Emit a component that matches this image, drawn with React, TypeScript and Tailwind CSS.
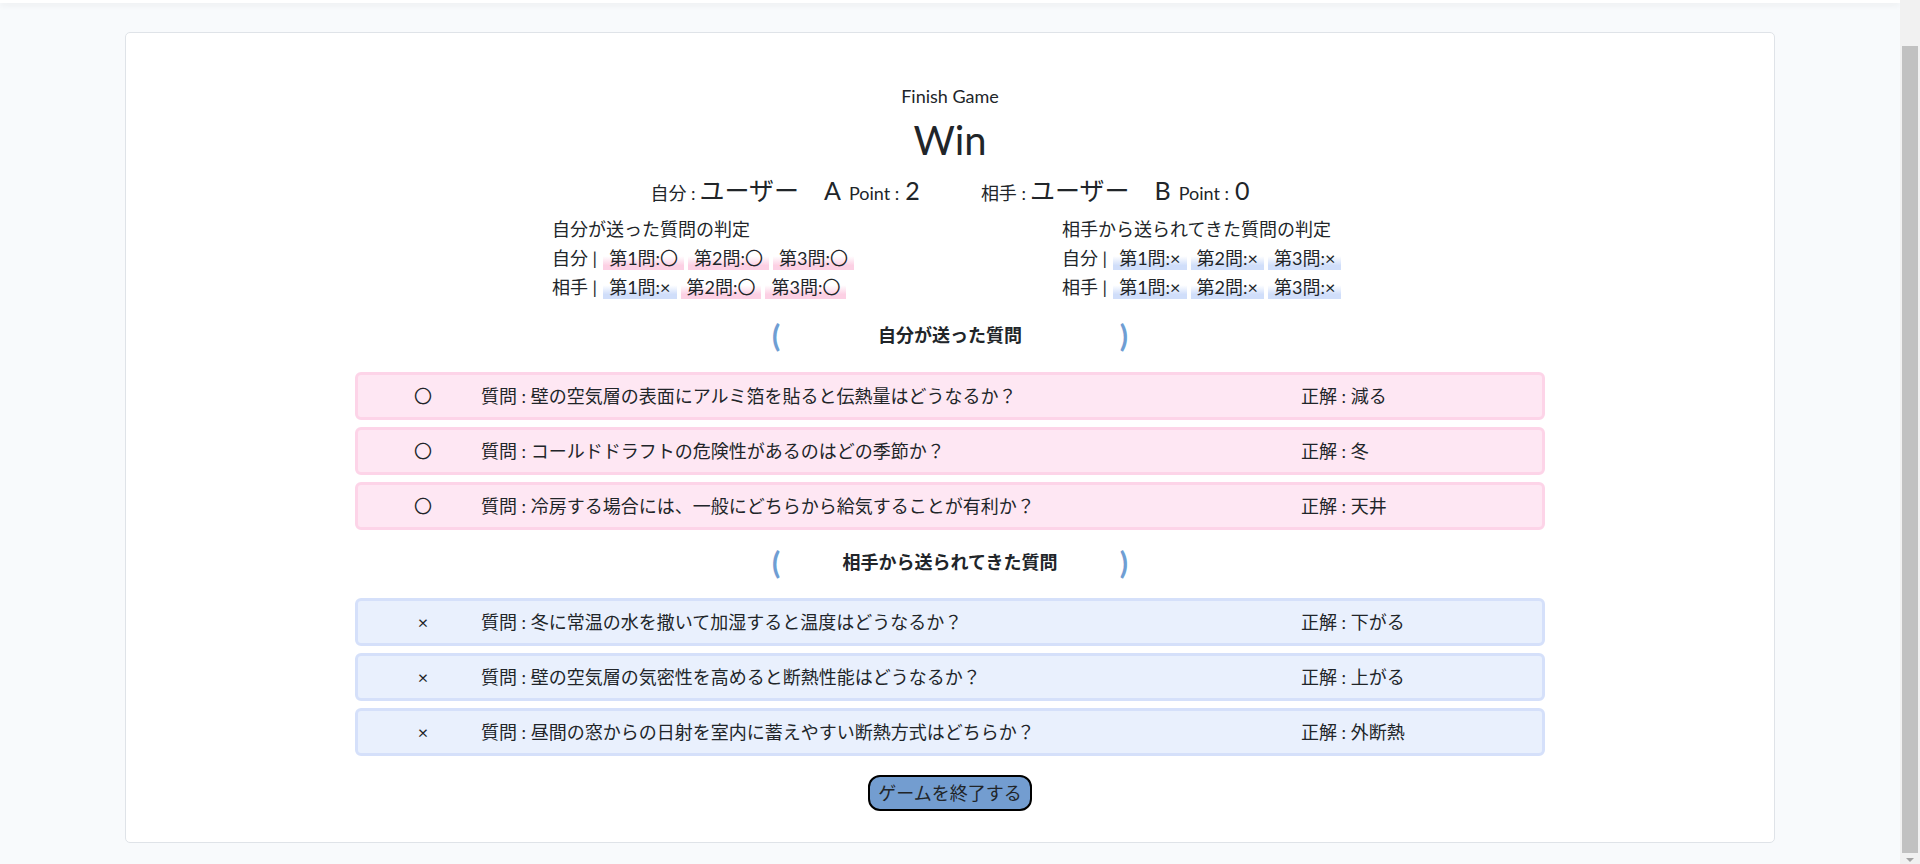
import React from "react";

const FONT = { fontFamily: 'Lato, "Noto Sans CJK JP", "Noto Sans", sans-serif' };

type Mark = "〇" | "×";

const myJudge: { label: string; items: Mark[] }[] = [
  { label: "自分", items: ["〇", "〇", "〇"] },
  { label: "相手", items: ["×", "〇", "〇"] },
];
const oppJudge: { label: string; items: Mark[] }[] = [
  { label: "自分", items: ["×", "×", "×"] },
  { label: "相手", items: ["×", "×", "×"] },
];

const sent = [
  { mark: "〇", q: "壁の空気層の表面にアルミ箔を貼ると伝熱量はどうなるか？", a: "減る" },
  { mark: "〇", q: "コールドドラフトの危険性があるのはどの季節か？", a: "冬" },
  { mark: "〇", q: "冷房する場合には、一般にどちらから給気することが有利か？", a: "天井" },
];
const received = [
  { mark: "×", q: "冬に常温の水を撒いて加湿すると温度はどうなるか？", a: "下がる" },
  { mark: "×", q: "壁の空気層の気密性を高めると断熱性能はどうなるか？", a: "上がる" },
  { mark: "×", q: "昼間の窓からの日射を室内に蓄えやすい断熱方式はどちらか？", a: "外断熱" },
];

function Badge({ n, m }: { n: number; m: Mark }) {
  const pink = m === "〇";
  return (
    <span
      className={
        "inline-block px-[6px] mr-[4px] leading-[23px] " +
        (pink
          ? "bg-[linear-gradient(rgba(255,255,255,0)_40%,#fcd0e4_80%)]"
          : "bg-[linear-gradient(rgba(255,255,255,0)_40%,#d0defa_80%)]")
      }
    >
      第{n}問:{m}
    </span>
  );
}

function JudgeBlock({
  title,
  rows,
  className,
}: {
  title: string;
  rows: { label: string; items: Mark[] }[];
  className: string;
}) {
  return (
    <div className={"flex flex-col whitespace-nowrap leading-[29px] " + className}>
      <div>{title}</div>
      {rows.map((r) => (
        <div key={r.label} className="flex items-center h-[29px]">
          <span className="mr-[6px]">{r.label} |</span>
          {r.items.map((m, i) => (
            <Badge key={i} n={i + 1} m={m} />
          ))}
        </div>
      ))}
    </div>
  );
}

function Heading({ text, className }: { text: string; className: string }) {
  return (
    <div className={"w-[356px] flex items-center justify-between h-[40px] " + className}>
      <span className="text-[30px] font-bold text-[#6f9ed3] leading-[40px]">(</span>
      <span className="font-bold text-[18px]">{text}</span>
      <span className="text-[30px] font-bold text-[#6f9ed3] leading-[40px]">)</span>
    </div>
  );
}

function QRow({
  mark,
  q,
  a,
  pink,
}: {
  mark: string;
  q: string;
  a: string;
  pink: boolean;
}) {
  return (
    <div
      className={
        "w-[1190px] h-[48px] flex items-center rounded-[6px] border-[3px] " +
        (pink ? "bg-[#fee7f3] border-[#fdd4e8]" : "bg-[#e9f0fd] border-[#d5e0fa]")
      }
    >
      <div className="w-[123px] pl-[7px] text-center">{mark}</div>
      <div className="w-[820px] whitespace-nowrap">質問 : {q}</div>
      <div className="flex-1 whitespace-nowrap">正解 : {a}</div>
    </div>
  );
}

export default function App() {
  return (
    <div className="flex w-[1920px] h-[864px] overflow-hidden bg-[#f8fafc] text-[#212529] text-[18px]" style={FONT}>
      <div className="flex-1 flex flex-col">
        <div className="h-[3px] bg-white shadow-[0_2px_6px_rgba(0,0,0,0.08)]" />
        <div className="px-[125px] pt-[29px]">
          <div className="h-[811px] bg-white border border-[#dfe3e8] rounded-[5px] flex flex-col items-center pt-[49px]">
            <div className="leading-[29px]">Finish Game</div>
            <div className="text-[40px] leading-[48px] mt-[5px]">Win</div>
            <div className="flex items-baseline gap-[61px] mt-[11px] leading-[30px]">
              <div className="flex items-baseline">
                <span>自分 :</span>
                <span className="text-[25px] ml-[4px]">ユーザー　A</span>
                <span className="ml-[8px]">Point :</span>
                <span className="text-[25px] ml-[6px]">2</span>
              </div>
              <div className="flex items-baseline">
                <span>相手 :</span>
                <span className="text-[25px] ml-[4px]">ユーザー　B</span>
                <span className="ml-[8px]">Point :</span>
                <span className="text-[25px] ml-[6px]">0</span>
              </div>
            </div>
            <div className="flex mt-[7px] ml-[-2px]">
              <JudgeBlock title="自分が送った質問の判定" rows={myJudge} className="w-[510px]" />
              <JudgeBlock title="相手から送られてきた質問の判定" rows={oppJudge} className="w-[284px]" />
            </div>
            <Heading text="自分が送った質問" className="mt-[13px]" />
            <div className="flex flex-col gap-[7px] mt-[17px]">
              {sent.map((r, i) => (
                <QRow key={i} {...r} pink />
              ))}
            </div>
            <Heading text="相手から送られてきた質問" className="mt-[12px]" />
            <div className="flex flex-col gap-[7px] mt-[16px]">
              {received.map((r, i) => (
                <QRow key={i} {...r} pink={false} />
              ))}
            </div>
            <button className="mt-[19px] h-[36px] px-[8px] border-2 border-black rounded-[12px] bg-[#739dd0] text-[18px] leading-[27px]">
              ゲームを終了する
            </button>
          </div>
        </div>
      </div>
      <div className="w-[20px] h-[864px] bg-[#f1f1f1] flex flex-col items-center pt-[46px]">
        <div className="w-[16px] h-[807px] bg-[#c1c1c1]" />
        <svg width="10" height="6" viewBox="0 0 10 6" className="mt-[4px]">
          <path d="M1 1 L9 1 L5 5 Z" fill="#a3a3a3" />
        </svg>
      </div>
    </div>
  );
}
